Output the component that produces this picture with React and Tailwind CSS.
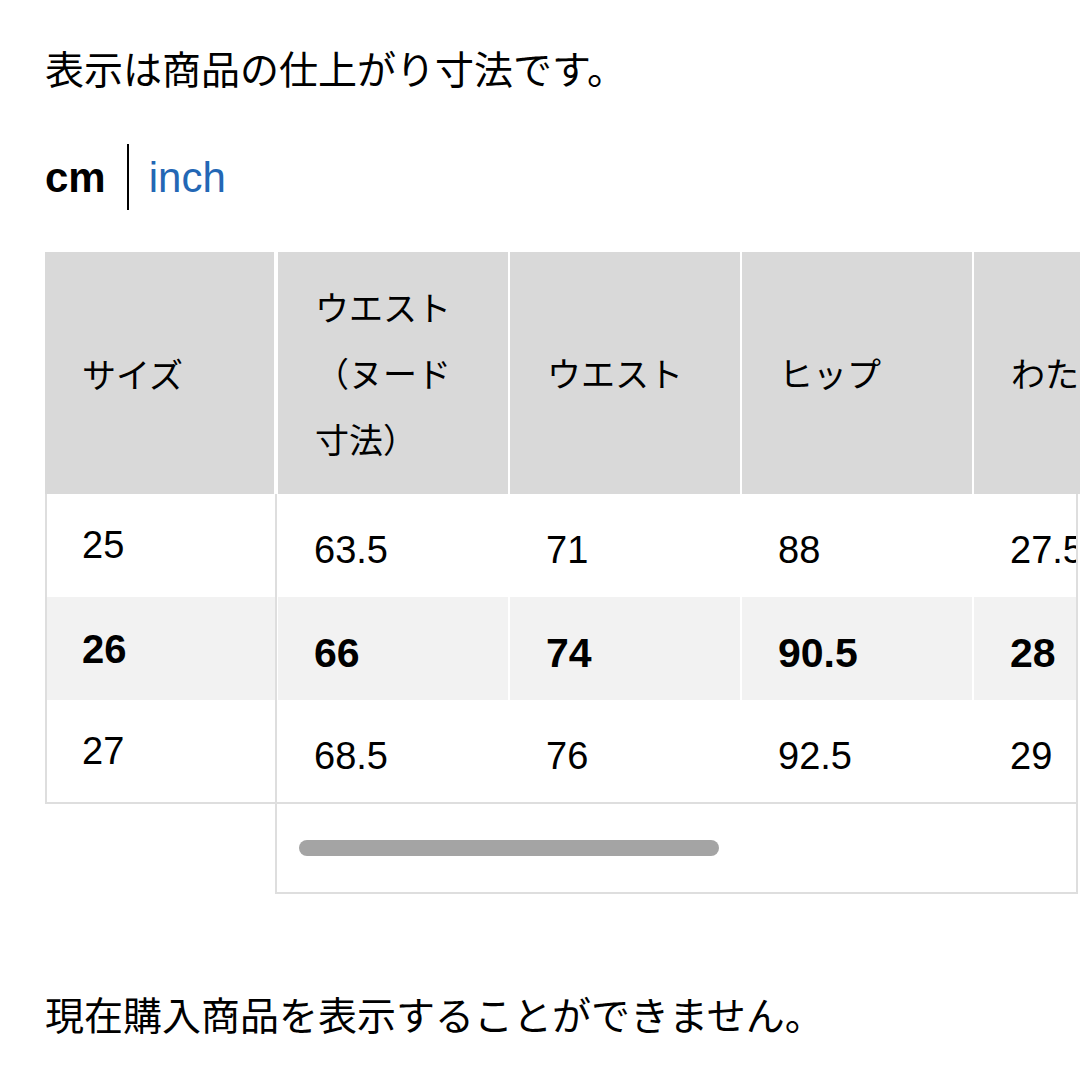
import React from 'react'

const heads = ['ウエスト（ヌード寸法）', 'ウエスト', 'ヒップ', 'わたり幅', '股上']
const rows = [
  { size: '25', vals: ['63.5', '71', '88', '27.5', '27'] },
  { size: '26', vals: ['66', '74', '90.5', '28', '27.5'], bold: true },
  { size: '27', vals: ['68.5', '76', '92.5', '29', '28'] },
]
const rowH = ['h-[103px]', 'h-[103px]', 'h-[102px]']

export default function App() {
  return (
    <div className="w-[1080px] h-[1080px] bg-white overflow-hidden text-black font-['Liberation_Sans','Noto_Sans_CJK_JP',sans-serif]">
      <div className="pl-[45px] pt-[38px]">
        <p className="text-[39px] leading-[58px] font-['Noto_Sans_CJK_JP',sans-serif]">表示は商品の仕上がり寸法です。</p>

        <div className="mt-[48px] flex items-center h-[66px]">
          <span className="font-bold text-[42px]">cm</span>
          <span className="ml-[21px] mr-[20px] w-[2px] h-[66px] bg-black"></span>
          <span className="text-[42px] text-[#2367b5]">inch</span>
        </div>

        {/* size table */}
        <div className="mt-[42px] flex">
          <div className="w-[230px] flex flex-col shrink-0">
            <div className="h-[242px] w-[229px] bg-[#d9d9d9] flex items-center pl-[37px] text-[34px] font-['Noto_Sans_CJK_JP',sans-serif]">
              サイズ
            </div>
            <div className="border-l-2 border-b-2 border-[#dedede]">
              {rows.map((r, i) => (
                <div
                  key={r.size}
                  className={`${rowH[i]} flex items-center pl-[35px] ${r.bold ? 'bg-[#f2f2f2] font-bold text-[40px]' : 'text-[38px]'}`}
                >
                  {r.size}
                </div>
              ))}
            </div>
          </div>

          <div className="w-[805px] flex flex-col">
            <div className="h-[242px] flex gap-[2px] pl-[3px] overflow-hidden">
              {heads.map((h) => (
                <div
                  key={h}
                  className="w-[230px] shrink-0 bg-[#d9d9d9] flex items-center px-[37px] text-[34px] leading-[66px] font-['Noto_Sans_CJK_JP',sans-serif]"
                >
                  {h}
                </div>
              ))}
            </div>
            <div className="w-[803px] border-l-2 border-r-2 border-b-2 border-[#dedede]">
              <div className="overflow-hidden border-b-2 border-[#dedede]">
                {rows.map((r, i) => (
                  <div key={r.size} className={`${rowH[i]} flex gap-[2px] pl-px`}>
                    {r.vals.map((v, j) => (
                      <div
                        key={j}
                        className={`w-[230px] shrink-0 flex items-center pl-[36px] pt-[10px] ${r.bold ? 'bg-[#f2f2f2] font-bold text-[41px]' : 'text-[38px]'}`}
                      >
                        {v}
                      </div>
                    ))}
                  </div>
                ))}
              </div>
              <div className="h-[88px] flex items-center pl-[22px]">
                <div className="w-[420px] h-[16px] rounded-full bg-[#a4a4a4]"></div>
              </div>
            </div>
          </div>
        </div>

        <p className="mt-[90px] text-[39px] leading-[58px] font-['Noto_Sans_CJK_JP',sans-serif]">現在購入商品を表示することができません。</p>
      </div>
    </div>
  )
}
